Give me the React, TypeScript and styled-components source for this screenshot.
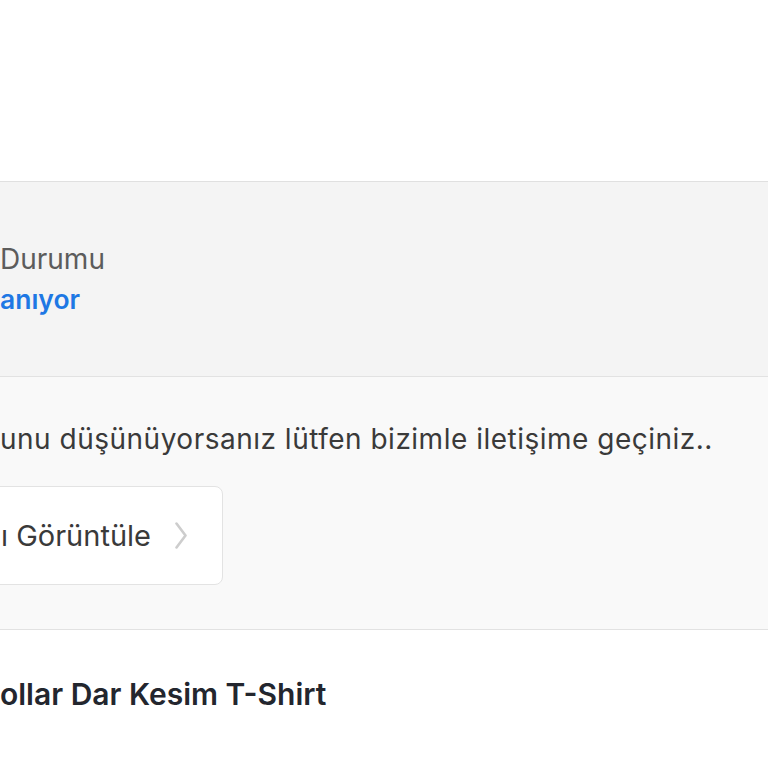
import React from "react";
import styled, { createGlobalStyle } from "styled-components";

const GlobalStyle = createGlobalStyle`
  html, body { margin: 0; padding: 0; background: #ffffff; }
  body { font-family: Inter, "Open Sans", sans-serif; -webkit-font-smoothing: antialiased; }
  * { box-sizing: border-box; }
`;

const Page = styled.div`
  width: 768px;
  height: 768px;
  overflow: hidden;
  display: flex;
  flex-direction: column;
  background: #ffffff;
`;

const TopSpace = styled.div`
  height: 181px;
  flex: none;
`;

const StatusPanel = styled.section`
  flex: none;
  background: #f4f4f4;
  border-top: 1px solid #e0e0e0;
  border-bottom: 1px solid #e2e2e2;
  padding: 57px 0 57px;
  display: flex;
  flex-direction: column;
`;

const Line = styled.div<{ $size?: number; $track?: number }>`
  font-size: ${(p) => p.$size ?? 28}px;
  letter-spacing: ${(p) => p.$track ?? 0}px;
  line-height: 40px;
  white-space: nowrap;
`;

const StatusLabel = styled(Line)`
  color: #5c5c5c;
  font-weight: 400;
`;

const StatusValue = styled(Line)`
  color: #1e78e4;
  font-weight: 600;
`;

const HelpPanel = styled.section`
  flex: none;
  background: #f9f9f9;
  border-bottom: 1px solid #e2e2e2;
  padding: 42px 0 44px;
  display: flex;
  flex-direction: column;
  align-items: flex-start;
  gap: 27px;
`;

const Message = styled(Line)`
  color: #3a3a3a;
`;

const ViewButton = styled.button`
  margin-left: -14px;
  height: 99px;
  padding: 0 35px 0 14px;
  background: #ffffff;
  border: 1px solid #e3e3e3;
  border-radius: 8px;
  display: flex;
  align-items: center;
  gap: 24px;
  font-family: inherit;
  font-size: 29px;
  color: #3a3a3a;
  cursor: pointer;
`;

const Chevron = styled.svg`
  width: 12px;
  height: 27px;
  flex: none;
`;

const TitleArea = styled.section`
  flex: none;
  padding: 44px 0 0;
`;

const Title = styled(Line)`
  color: #23262e;
  font-weight: 600;
`;

export default function App() {
  return (
    <>
      <GlobalStyle />
      <Page>
        <TopSpace />
        <StatusPanel>
          <StatusLabel $size={28}>Durumu</StatusLabel>
          <StatusValue $size={26.5}>anıyor</StatusValue>
        </StatusPanel>
        <HelpPanel>
          <Message $size={28} $track={0.5}>
            unu düşünüyorsanız lütfen bizimle iletişime geçiniz..
          </Message>
          <ViewButton type="button">
            <span>ı Görüntüle</span>
            <Chevron viewBox="0 0 12 27" fill="none">
              <polyline
                points="1.5,1.5 10.5,13.5 1.5,25.5"
                stroke="#cdcdcd"
                strokeWidth="2.6"
                strokeLinecap="round"
                strokeLinejoin="round"
              />
            </Chevron>
          </ViewButton>
        </HelpPanel>
        <TitleArea>
          <Title $size={30}>ollar Dar Kesim T-Shirt</Title>
        </TitleArea>
      </Page>
    </>
  );
}
